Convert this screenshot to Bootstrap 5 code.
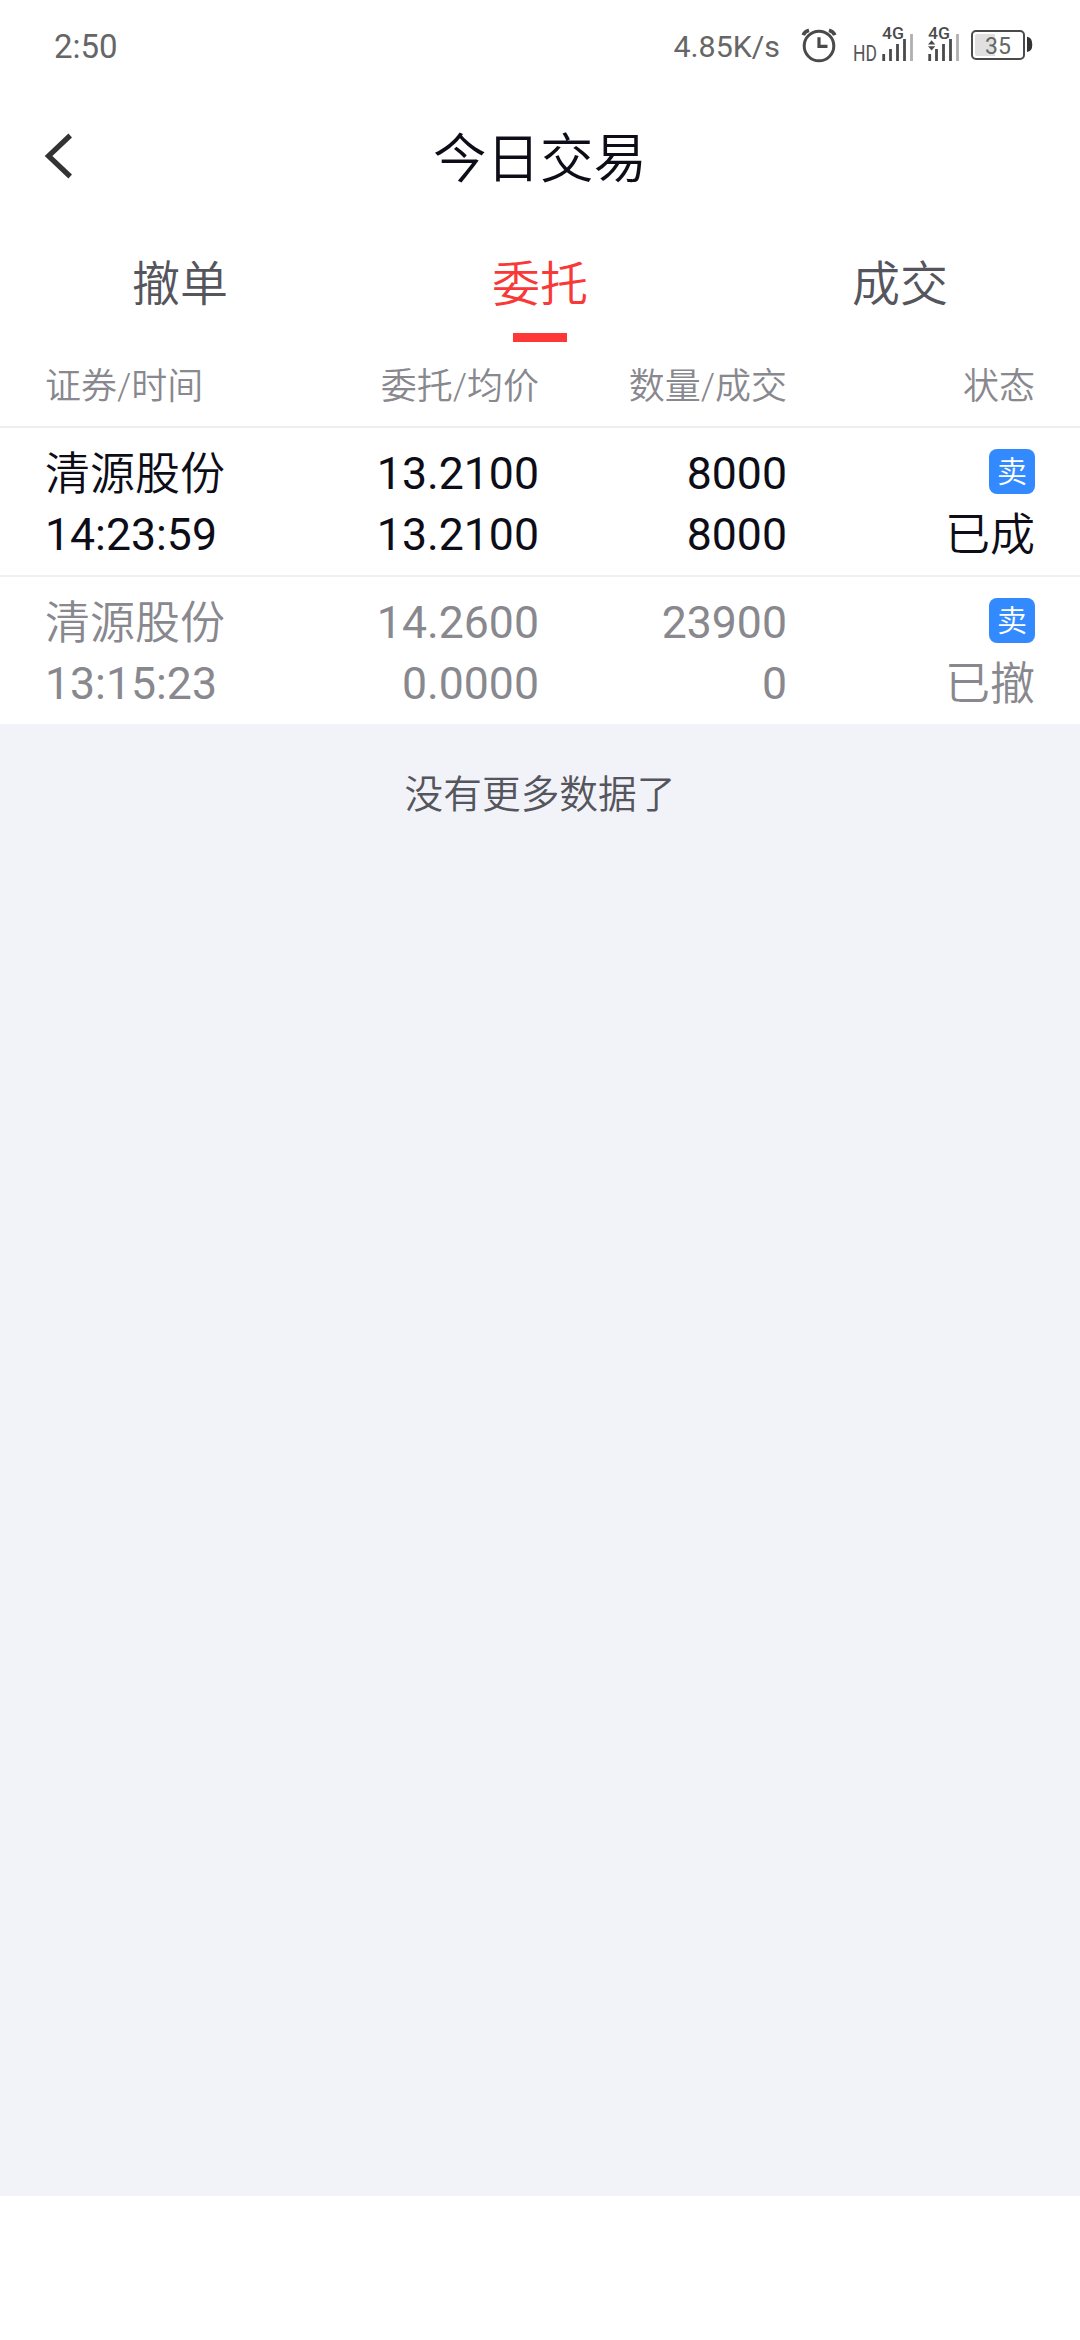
<!DOCTYPE html>
<html lang="zh-CN">
<head>
<meta charset="utf-8">
<meta name="viewport" content="width=device-width, initial-scale=1">
<title>今日交易</title>
<link href="https://cdn.jsdelivr.net/npm/bootstrap@5.3.0/dist/css/bootstrap.min.css" rel="stylesheet">
<style>
body{font-family:Roboto,"Noto Sans CJK SC",sans-serif;font-weight:400;background:#fff;color:#0d0d18}
.cjk{font-weight:350}
.statusbar{height:92px;padding:0 48px 0 54px;color:#666}
.clock{font-size:33px;line-height:92px;padding-top:1px}
.speed{font-size:30.4px;line-height:92px;margin-right:20px;padding-top:1px}
.statusbar svg{display:block;overflow:visible;font-family:Roboto,sans-serif}
.titlebar{height:132px;padding-left:42px;padding-bottom:4px}
.titlebar h1{font-size:53.5px;line-height:132px;top:2px}
.back{width:34px;height:50px}
.tabs{height:118px}
.tabs .nav-link{font-size:48px;line-height:122px;height:118px;color:#55555d}
.tabs .nav-link.active{color:#f93838}
.tabs .nav-link.active::after{content:"";position:absolute;left:50%;bottom:0;width:54px;height:9px;margin-left:-27px;background:#ff3737}
.grid-line{display:grid;grid-template-columns:270px 224px 248px 248px;padding:0 45px}
.cols{height:86px;font-size:36px;line-height:90px;color:#88888e;border-bottom:2px solid #eee}
.order{font-size:44.6px;line-height:61px;padding-top:16px;padding-bottom:9px}
.order .cjk{font-size:45px}
.order+.order{border-top:2px solid #f0f0f0}
.cancelled{color:#88888e}
.order .side{width:46px;height:45px;border-radius:8px;background:#338aff;color:#fff;font-size:30px;line-height:46px;padding:0;margin-top:5px;margin-bottom:11px}
.rest{background:#f2f3f8;height:1472px;padding-top:42px;font-size:38.7px;line-height:58px;color:#55555d}
</style>
</head>
<body>
<header>
  <div class="statusbar d-flex align-items-center justify-content-between">
    <span class="clock">2:50</span>
    <div class="d-flex align-items-center">
      <span class="speed">4.85K/s</span>
      <svg width="232" height="92" viewBox="800 0 232 92" fill="none">
        <g stroke="#4a4a4a" stroke-width="3">
          <circle cx="819" cy="46" r="14.8"/>
          <path d="M819 37.3V46.3H827.5" stroke-width="3.2"/>
          <path d="M803.2 35.2Q804.5 31.5 809 30.2M834.8 35.2Q833.5 31.5 829 30.2" stroke-width="3.6"/>
        </g>
        <text x="853" y="61" font-size="21.5" textLength="24" lengthAdjust="spacingAndGlyphs" fill="#555">HD</text>
        <g fill="#4a4a4a">
          <text x="882" y="39" font-size="16.5" font-weight="500" textLength="22" lengthAdjust="spacingAndGlyphs">4G</text>
          <path d="M882.3 54h2.8v7h-2.8zM889.1 49h2.8v12h-2.8zM896.1 44h2.8v17h-2.8zM903.1 39h2.8v22h-2.8z"/>
          <text x="928" y="39" font-size="16.5" font-weight="500" textLength="22" lengthAdjust="spacingAndGlyphs">4G</text>
          <path d="M928.3 54h2.8v7h-2.8zM935.1 49h2.8v12h-2.8zM942.1 44h2.8v17h-2.8zM949.1 39h2.8v22h-2.8z"/>
          <path d="M928 44.5L931.6 40.3L935.3 44.5zM928 46.2H935.3L931.6 50.4z"/>
        </g>
        <path d="M910.1 34h2.8v27h-2.8zM956.1 34h2.8v27h-2.8z" fill="#b0b0b0"/>
        <rect x="972" y="31" width="52" height="28" rx="4" stroke="#4a4a4a" stroke-width="2"/>
        <path d="M977 34H995V56H977Q975 56 975 54V36Q975 34 977 34z" fill="#e0e0e0"/>
        <path d="M1027 36.7Q1032.3 37.5 1032.3 44.5T1027 52z" fill="#333"/>
        <text x="985" y="53.5" font-size="23" fill="#666">35</text>
      </svg>
    </div>
  </div>
  <div class="titlebar position-relative d-flex align-items-center">
    <h1 class="cjk position-absolute start-0 w-100 text-center m-0">今日交易</h1>
    <svg class="back position-relative" viewBox="42 131 34 50" fill="none"><path d="M70.2 135.5L48.5 156L70.2 176.5" stroke="#333" stroke-width="5.2"/></svg>
  </div>
  <nav class="tabs nav nav-fill cjk">
    <a class="nav-link col-4 p-0" href="#">撤单</a>
    <a class="nav-link col-4 p-0 active position-relative" href="#">委托</a>
    <a class="nav-link col-4 p-0" href="#">成交</a>
  </nav>
</header>
<main>
  <div class="grid-line cols cjk text-end">
    <span class="text-start">证券/时间</span><span>委托/均价</span><span>数量/成交</span><span>状态</span>
  </div>
  <section class="grid-line order text-end">
    <div class="d-flex flex-column text-start"><span class="cjk">清源股份</span><span>14:23:59</span></div>
    <div class="d-flex flex-column"><span>13.2100</span><span>13.2100</span></div>
    <div class="d-flex flex-column"><span>8000</span><span>8000</span></div>
    <div class="d-flex flex-column align-items-end"><span class="badge side cjk">卖</span><span class="cjk">已成</span></div>
  </section>
  <section class="grid-line order cancelled text-end">
    <div class="d-flex flex-column text-start"><span class="cjk">清源股份</span><span>13:15:23</span></div>
    <div class="d-flex flex-column"><span>14.2600</span><span>0.0000</span></div>
    <div class="d-flex flex-column"><span>23900</span><span>0</span></div>
    <div class="d-flex flex-column align-items-end"><span class="badge side cjk">卖</span><span class="cjk">已撤</span></div>
  </section>
  <div class="rest cjk text-center">没有更多数据了</div>
</main>
<script src="https://cdn.jsdelivr.net/npm/bootstrap@5.3.0/dist/js/bootstrap.bundle.min.js"></script>
</body>
</html>
